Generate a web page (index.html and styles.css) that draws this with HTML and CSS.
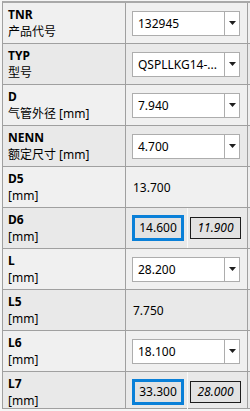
FILE: index.html
```html
<!DOCTYPE html>
<html lang="zh">
<head>
    <meta charset="UTF-8">
    <meta name="viewport" content="width=device-width, initial-scale=1.0">
    <title>Properties</title>
    <link rel="stylesheet" href="styles.css">
</head>
<body>
    <div class="grid">
        <div class="row">
            <div class="name"><b>TNR</b><span>产品代号</span></div>
            <div class="val">
                <div class="combo"><span class="text">132945</span><span class="btn"><svg width="7" height="4" viewBox="0 0 7 4"><polygon points="0,0 7,0 3.5,4"/></svg></span></div>
            </div>
            <div class="rest"></div>
        </div>
        <div class="row alt">
            <div class="name"><b>TYP</b><span>型号</span></div>
            <div class="val">
                <div class="combo"><span class="text">QSPLLKG14-...</span><span class="btn"><svg width="7" height="4" viewBox="0 0 7 4"><polygon points="0,0 7,0 3.5,4"/></svg></span></div>
            </div>
            <div class="rest"></div>
        </div>
        <div class="row">
            <div class="name"><b>D</b><span>气管外径 [mm]</span></div>
            <div class="val">
                <div class="combo"><span class="text">7.940</span><span class="btn"><svg width="7" height="4" viewBox="0 0 7 4"><polygon points="0,0 7,0 3.5,4"/></svg></span></div>
            </div>
            <div class="rest"></div>
        </div>
        <div class="row alt">
            <div class="name"><b>NENN</b><span>额定尺寸 [mm]</span></div>
            <div class="val">
                <div class="combo"><span class="text">4.700</span><span class="btn"><svg width="7" height="4" viewBox="0 0 7 4"><polygon points="0,0 7,0 3.5,4"/></svg></span></div>
            </div>
            <div class="rest"></div>
        </div>
        <div class="row">
            <div class="name"><b>D5</b><span>[mm]</span></div>
            <div class="val plain">13.700</div>
            <div class="rest"></div>
        </div>
        <div class="row alt">
            <div class="name"><b>D6</b><span>[mm]</span></div>
            <div class="val pair">
                <div class="sub"><div class="box-focus">14.600</div></div>
                <div class="sep"></div>
                <div class="sub right"><div class="box-ref">11.900</div></div>
            </div>
            <div class="rest"></div>
        </div>
        <div class="row">
            <div class="name"><b>L</b><span>[mm]</span></div>
            <div class="val">
                <div class="combo"><span class="text">28.200</span><span class="btn"><svg width="7" height="4" viewBox="0 0 7 4"><polygon points="0,0 7,0 3.5,4"/></svg></span></div>
            </div>
            <div class="rest"></div>
        </div>
        <div class="row alt">
            <div class="name"><b>L5</b><span>[mm]</span></div>
            <div class="val plain">7.750</div>
            <div class="rest"></div>
        </div>
        <div class="row">
            <div class="name"><b>L6</b><span>[mm]</span></div>
            <div class="val">
                <div class="combo"><span class="text">18.100</span><span class="btn"><svg width="7" height="4" viewBox="0 0 7 4"><polygon points="0,0 7,0 3.5,4"/></svg></span></div>
            </div>
            <div class="rest"></div>
        </div>
        <div class="row alt last">
            <div class="name"><b>L7</b><span>[mm]</span></div>
            <div class="val pair">
                <div class="sub"><div class="box-focus">33.300</div></div>
                <div class="sep"></div>
                <div class="sub right"><div class="box-ref">28.000</div></div>
            </div>
            <div class="rest"></div>
        </div>
    </div>
</body>
</html>
```

FILE: styles.css
```css
body {
    margin: 0;
    padding-top: 1px;
    background: #f5f5f5;
    font-family: "Noto Sans", "Noto Sans CJK SC", sans-serif;
    font-size: 12px;
    color: #000;
}
.grid {
    margin-left: 2px;
    border-left: 1px solid #a0a0a0;
    border-top: 2px solid #a9a9a9;
}
.row {
    display: grid;
    grid-template-columns: 123px 122px 1fr;
    height: 40px;
    border-bottom: 1px solid #a0a0a0;
    background: #f0f0f0;
}
.row.alt {
    background: #e9e9e9;
}
.row.last {
    height: 36px;
}
.name {
    border-right: 1px solid #a0a0a0;
    padding: 3px 5px;
    line-height: 17px;
    white-space: nowrap;
}
.name b,
.name span {
    display: block;
}
.val {
    border-right: 1px solid #a0a0a0;
    display: flex;
    align-items: center;
    padding: 0 7px 0 6px;
}
.val.plain {
    padding-left: 7px;
}
.combo {
    flex: 1;
    height: 25px;
    box-sizing: border-box;
    border: 1px solid #adadad;
    background: #fff;
    display: flex;
}
.combo .text {
    flex: 1;
    padding-left: 5px;
    line-height: 23px;
    white-space: nowrap;
    overflow: hidden;
}
.combo .btn {
    width: 14px;
    border-left: 1px solid #adadad;
    display: flex;
    align-items: center;
    justify-content: center;
}
.combo svg {
    fill: #1e1e1e;
}
.val.pair {
    display: grid;
    grid-template-columns: 61px 1px 1fr;
    padding: 0;
    align-items: stretch;
}
.sub {
    display: flex;
    align-items: center;
    padding-left: 6px;
}
.sub.right {
    padding-left: 2px;
}
.sep {
    background: #f9f9f9;
}
.box-focus {
    width: 52px;
    height: 26px;
    box-sizing: border-box;
    border: 3px solid #0a80d8;
    background: #e2e2e2;
    text-align: center;
    line-height: 20px;
}
.box-ref {
    width: 51px;
    height: 22px;
    box-sizing: border-box;
    border: 1px solid #1c1c1c;
    background: #e2e2e2;
    text-align: center;
    line-height: 20px;
    font-style: italic;
}
```
